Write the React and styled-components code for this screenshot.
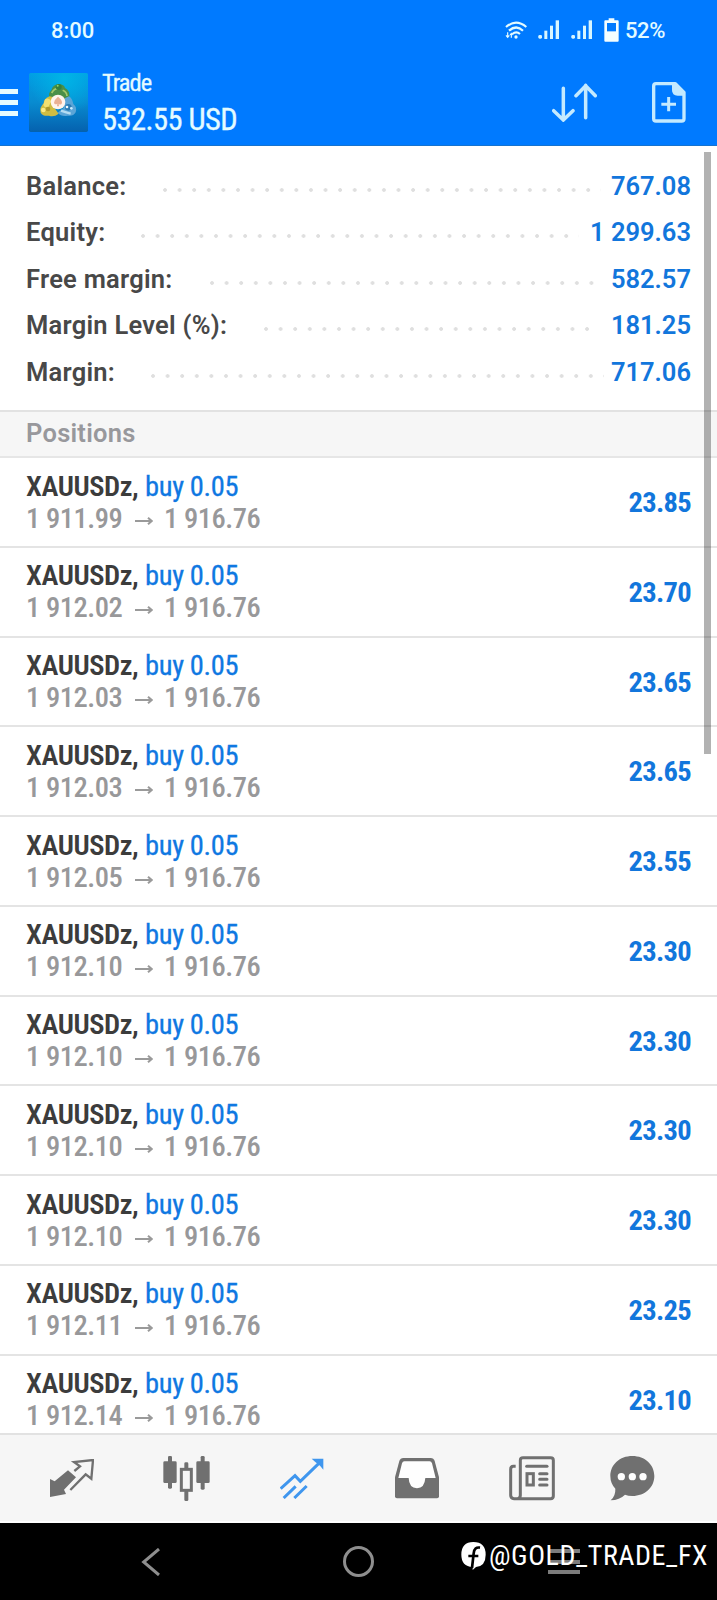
import React from "react";
import styled, { createGlobalStyle } from "styled-components";

const summary = [
  { label: "Balance:", value: "767.08", start: 162.5, dots: 30 },
  { label: "Equity:", value: "1 299.63", start: 140.5, dots: 30 },
  { label: "Free margin:", value: "582.57", start: 209.5, dots: 27 },
  { label: "Margin Level (%):", value: "181.25", start: 263.5, dots: 23 },
  { label: "Margin:", value: "717.06", start: 151, dots: 31 },
];

const positions = [
  { open: "1 911.99", profit: "23.85" },
  { open: "1 912.02", profit: "23.70" },
  { open: "1 912.03", profit: "23.65" },
  { open: "1 912.03", profit: "23.65" },
  { open: "1 912.05", profit: "23.55" },
  { open: "1 912.10", profit: "23.30" },
  { open: "1 912.10", profit: "23.30" },
  { open: "1 912.10", profit: "23.30" },
  { open: "1 912.10", profit: "23.30" },
  { open: "1 912.11", profit: "23.25" },
  { open: "1 912.14", profit: "23.10" },
];

const WifiIcon = () => (
  <svg width="22" height="19" viewBox="0 0 66 57" fill="none" stroke="#e4fbff">
    <path d="M3 18Q33-8 64 18M12 29Q34 10 54 29M22 39Q34 29 45 39" strokeWidth="6.5" />
    <circle cx="33" cy="48" r="5" fill="#e4fbff" stroke="none" />
    <path d="M8 34v14M3 43l5 6 5-6M19 50V38M15 42l4-5 4 5" strokeWidth="3.5" />
  </svg>
);

const SignalIcon = () => (
  <svg width="22" height="20" viewBox="0 0 66 60" fill="#d8f6ff">
    <rect x="1" y="45" width="11" height="11" rx="4" />
    <rect x="19" y="32" width="9" height="25" />
    <rect x="36" y="17" width="9" height="40" />
    <rect x="53" y="1" width="10" height="56" />
  </svg>
);

const BatteryIcon = () => (
  <svg width="15" height="24" viewBox="0 0 45 72">
    <path d="M14 1h17v6h10q3 0 3 3v58q0 3-3 3H4q-3 0-3-3V10q0-3 3-3h10z" fill="#f4feff" />
    <rect x="9" y="15" width="27" height="25" fill="#007aff" />
  </svg>
);

const AppLogo = () => (
  <svg width="59" height="59" viewBox="0 0 177 177">
    <defs>
      <linearGradient id="sky" x1="0" y1="0" x2="0" y2="1">
        <stop offset="0" stopColor="#009fe4" />
        <stop offset="0.5" stopColor="#088bd0" />
        <stop offset="1" stopColor="#0561ae" />
      </linearGradient>
      <radialGradient id="glow" cx="0.6" cy="0.1" r="0.6">
        <stop offset="0" stopColor="#00b4e6" />
        <stop offset="1" stopColor="#00b4e6" stopOpacity="0" />
      </radialGradient>
    </defs>
    <rect width="177" height="177" rx="5" fill="url(#sky)" />
    <rect width="177" height="177" rx="5" fill="url(#glow)" />
    <path d="M62 74q-6-12 5-22 4-17 21-18 17-1 20 11 15 8 13 27l-14 18-16-19-18 6z" fill="#4a8f48" />
    <path d="M68 60q7-13 17-13M101 52q12 5 13 17" stroke="#a5c96b" strokeWidth="5" fill="none" />
    <circle cx="89" cy="42" r="9" fill="#357f3d" />
    <circle cx="86" cy="38" r="3" fill="#91d467" />
    <path d="M62 70q-18 7-18 21-13 12-9 28 8 12 25 9 15 5 29-6l-14-19 5-29z" fill="#cfbd42" />
    <path d="M48 79q11-7 19 5l-9 19q-11 3-15-7z" fill="#f1df70" />
    <circle cx="43" cy="111" r="7" fill="#fae984" />
    <circle cx="57" cy="108" r="7" fill="#af982b" />
    <path d="M107 76l13-6q10 6 13 23 12 9 7 25-7 13-25 10-17 4-29-9l18-14z" fill="#5ba5d7" />
    <path d="M96 113q12 5 29 9" stroke="#b4dcf2" strokeWidth="7" />
    <circle cx="118" cy="103" r="10" fill="#2c7cb4" />
    <circle cx="114" cy="102" r="4" fill="#eefaff" />
    <circle cx="127" cy="106" r="4" fill="#c9ecff" />
    <circle cx="87" cy="87" r="22" fill="#fff4ec" />
    <path d="M87 71q13 10 12 19-3 8-10 2l1 8h-6l1-8q-8 5-10-3 1-9 12-18z" fill="#eab093" />
  </svg>
);

const SortIcon = () => (
  <svg width="45" height="39" viewBox="0 0 135 117" fill="none" stroke="#c4eaff" strokeWidth="10.5" strokeLinecap="round">
    <path d="M34 16v92M5 83l29 28 29-28M101 104V7M72 38L101 8l29 30" />
  </svg>
);

const NewOrderIcon = () => (
  <svg width="34" height="41" viewBox="0 0 102 123" fill="none" stroke="#c4eaff" strokeWidth="10">
    <path d="M12 5h58l26 26v79q0 7-7 7H12q-7 0-7-7V12q0-7 7-7z" strokeLinejoin="round" />
    <path d="M60 5h12l26 26v10H77q-17 0-17-17z" fill="#c4eaff" stroke="none" />
    <path d="M50 45v43M28 67h44" strokeWidth="9" />
  </svg>
);

const QuotesIcon = () => (
  <svg width="44" height="38" viewBox="0 0 132 114" fill="none" stroke="#707070" strokeWidth="7">
    <path d="M0 60l14 7 40-33 24 21-36 37 6 13-48 9z" fill="#707070" stroke="none" />
    <path d="M73 36l17-14-18-13 57-6-5 56-17-13-46 47" />
  </svg>
);

const ChartIcon = () => (
  <svg width="47" height="45" viewBox="0 0 141 135" fill="#707070">
    <rect x="1" y="16" width="40" height="65" rx="4" />
    <rect x="15" y="0" width="12" height="98" rx="4" />
    <rect x="100" y="16" width="40" height="65" rx="4" />
    <rect x="113" y="0" width="12" height="101" rx="4" />
    <rect x="64" y="19" width="12" height="20" rx="4" />
    <rect x="64" y="104" width="12" height="31" rx="4" />
    <rect x="55" y="40" width="30" height="63" fill="none" stroke="#707070" strokeWidth="9" />
  </svg>
);

const TradeIcon = () => (
  <svg width="44" height="41" viewBox="0 0 132 123" fill="none" stroke="#3f96ee" strokeWidth="9">
    <path d="M2 92l43-39 16 17 61-59M11 120l36-35M43 120l37-36" />
    <path d="M95 2h35v33l-10-12-15-12z" fill="#3f96ee" stroke="none" />
  </svg>
);

const HistoryIcon = () => (
  <svg width="44" height="41" viewBox="0 0 132 123">
    <path
      d="M25 0h82q9 0 12 9l13 49v57q0 6-6 6H6q-6 0-6-6V58L13 9q3-9 12-9z"
      fill="#707070"
    />
    <path d="M28 10h76q5 0 7 6l11 44H91q-2 30-25 31-24-1-25-31H10l11-44q2-6 7-6z" fill="#fefefe" />
  </svg>
);

const NewsIcon = () => (
  <svg width="46" height="45" viewBox="0 0 138 135" fill="none" stroke="#707070" strokeWidth="9">
    <path d="M20 31h-7q-8 0-8 9v78q0 10 10 10h110q8 0 8-8V13q0-8-8-8H42q-8 0-8 8v105q0 10-9 10" />
    <path d="M53 31h61" strokeLinecap="round" />
    <rect x="54" y="53" width="19" height="34" />
    <path d="M92 53h22M92 70h22M92 87h22" strokeLinecap="round" />
  </svg>
);

const MessagesIcon = () => (
  <svg width="45" height="45" viewBox="0 0 135 135">
    <path d="M67 0c38 0 66 26 66 60s-28 60-66 60q-13 0-22-4-16 16-43 17 15-13 14-35Q1 82 1 60C1 26 29 0 67 0z" fill="#707070" />
    <g fill="#fefefe">
      <circle cx="34" cy="62" r="11" />
      <circle cx="67" cy="62" r="11" />
      <circle cx="99" cy="62" r="11" />
    </g>
  </svg>
);

const FacebookIcon = () => (
  <svg width="25" height="29" viewBox="0 0 75 87">
    <path d="M37 0q37 0 37 38 0 34-29 37L35 84v-9Q1 73 1 38 1 0 37 0z" fill="#fff" />
    <path d="M57 17q-17-3-19 17l-5 44M22 42h30" stroke="#000" strokeWidth="8" fill="none" />
  </svg>
);

const App = () => {
  return (
    <Screen>
      <GlobalStyle />
      <Header>
        <StatusBar>
          <Clock>8:00</Clock>
          <StatusIcons>
            <WifiIcon />
            <SignalIcon />
            <SignalIcon />
            <BatteryIcon />
            <span>52%</span>
          </StatusIcons>
        </StatusBar>
        <Toolbar>
          <MenuButton>
            <i />
            <i />
            <i />
          </MenuButton>
          <AppLogo />
          <Heading>
            <Title>Trade</Title>
            <Amount>532.55 USD</Amount>
          </Heading>
          <Actions>
            <SortIcon />
            <NewOrderIcon />
          </Actions>
        </Toolbar>
      </Header>

      <Content>
        <Summary>
          {summary.map((item) => (
            <SummaryRow key={item.label}>
              <Label $width={item.start - 26}>{item.label}</Label>
              <Dots $count={item.dots} />
              <Value>{item.value}</Value>
            </SummaryRow>
          ))}
        </Summary>
        <SectionTitle>Positions</SectionTitle>
        <PositionList>
          {positions.map((item, i) => (
            <Position key={i}>
              <div>
                <Line>
                  <Symbol>XAUUSDz,</Symbol>
                  <Side>buy 0.05</Side>
                </Line>
                <Line>
                  <Price $width={97}>{item.open}</Price>
                  <Arrow>
                    <svg width="18" height="10" viewBox="0 0 54 30" fill="none" stroke="#9a9a9a" strokeWidth="6">
                      <path d="M0 15h48M39 5l11 10-11 10" />
                    </svg>
                  </Arrow>
                  <Price>1 916.76</Price>
                </Line>
              </div>
              <Profit>{item.profit}</Profit>
            </Position>
          ))}
        </PositionList>
        <Scrollbar />
      </Content>

      <TabBar>
        <Tab><QuotesIcon /></Tab>
        <Tab><ChartIcon /></Tab>
        <Tab><TradeIcon /></Tab>
        <Tab><HistoryIcon /></Tab>
        <Tab><NewsIcon /></Tab>
        <Tab $width={87}><MessagesIcon /></Tab>
      </TabBar>

      <SystemNav>
        <svg width="19" height="28" viewBox="0 0 57 84" fill="none" stroke="#8e8e8e" strokeWidth="9">
          <path d="M54 3L8 42l46 39" />
        </svg>
        <HomeButton />
        <RecentButton>
          <i />
          <i />
          <i />
        </RecentButton>
        <Handle>
          <FacebookIcon />
          <HandleText>@GOLD_TRADE_FX</HandleText>
        </Handle>
      </SystemNav>
    </Screen>
  );
};

export default App;

const GlobalStyle = createGlobalStyle`
  * {
    box-sizing: border-box;
  }

  body {
    margin: 0;
    background: #000;
    font-family: Roboto, "Liberation Sans", sans-serif;
  }

  svg {
    display: block;
    flex-shrink: 0;
  }
`;

const Screen = styled.div`
  width: 717px;
  height: 1600px;
  display: flex;
  flex-direction: column;
  background: #fff;
  overflow: hidden;
`;

const Header = styled.header`
  height: 146px;
  background: #007aff;
  border-bottom: 1px solid #1673cf;
  color: #e4fbff;
`;

const StatusBar = styled.div`
  height: 60px;
  padding: 0 51px;
  display: flex;
  align-items: center;
  justify-content: space-between;
  font-size: 22px;
  font-weight: 500;
`;

const Clock = styled.span`
  letter-spacing: 0;
`;

const StatusIcons = styled.div`
  display: flex;
  align-items: center;
  gap: 11px;

  span {
    width: 41px;
    margin-left: -5px;
    letter-spacing: -0.4px;
  }
`;

const Toolbar = styled.div`
  height: 85px;
  display: flex;
  align-items: center;
`;

const MenuButton = styled.div`
  width: 29px;
  display: flex;
  flex-direction: column;
  gap: 6px;

  i {
    width: 18px;
    height: 5px;
    background: #e4fbff;
  }
`;

const Heading = styled.div`
  margin-left: 14px;
  padding-bottom: 2px;
  flex: 1;
  font-stretch: 75%;
`;

const Title = styled.div`
  font-size: 24.5px;
  line-height: 36px;
  letter-spacing: -1px;
  -webkit-text-stroke: 0.3px;
`;

const Amount = styled.div`
  font-size: 30.5px;
  line-height: 37px;
  letter-spacing: -0.55px;
  -webkit-text-stroke: 0.3px;
`;

const Actions = styled.div`
  display: flex;
  align-items: center;
  gap: 55px;
  padding-right: 31px;
`;

const Content = styled.main`
  position: relative;
  height: 1287px;
  overflow: hidden;
`;

const Summary = styled.section`
  height: 264px;
  padding: 16.5px 26px 0;
`;

const SummaryRow = styled.div`
  height: 46.5px;
  display: flex;
  align-items: center;
  font-size: 25.5px;
  font-weight: 600;
  line-height: 46px;
`;

const Label = styled.span`
  width: ${(props) => props.$width}px;
  color: #484848;
  white-space: nowrap;
  letter-spacing: 0.25px;
`;

const Dots = styled.span`
  width: ${(props) => props.$count * 14.6}px;
  height: 4px;
  margin-top: 8px;
  background: radial-gradient(circle at 2px 2px, #dfdfdf 1.5px, transparent 2.2px);
  background-size: 14.6px 4px;
`;

const Value = styled.span`
  margin-left: auto;
  color: #1276dc;
`;

const SectionTitle = styled.h2`
  height: 48px;
  margin: 0;
  padding: 0 26px;
  border-top: 2px solid #e2e2e2;
  border-bottom: 2px solid #e6e6e6;
  background: #f6f6f6;
  color: #98989c;
  font-size: 25.5px;
  font-weight: 600;
  line-height: 42px;
  letter-spacing: 0.25px;
`;

const PositionList = styled.div`
  font-size: 28.5px;
  font-stretch: 75%;
`;

const Position = styled.div`
  height: 89.75px;
  padding: 1.5px 26px 0;
  border-bottom: 2px solid #e4e4e4;
  display: flex;
  align-items: center;
  justify-content: space-between;
`;

const Line = styled.div`
  height: 32px;
  line-height: 32px;
  display: flex;
  white-space: nowrap;
`;

const Symbol = styled.span`
  width: 119px;
  color: #3c3c3c;
  font-weight: 600;
  letter-spacing: -0.45px;
`;

const Side = styled.span`
  color: #0f78e2;
  letter-spacing: -0.35px;
  -webkit-text-stroke: 0.3px;
`;

const Price = styled.span`
  width: ${(props) => (props.$width ? `${props.$width}px` : "auto")};
  color: #98989a;
  font-weight: 500;
  letter-spacing: -0.45px;
`;

const Arrow = styled.span`
  width: 18px;
  margin: 13px 11px 0 12px;
`;

const Profit = styled.span`
  color: #1276dc;
  font-weight: 700;
  letter-spacing: -0.7px;
`;

const Scrollbar = styled.div`
  position: absolute;
  top: 6px;
  right: 6px;
  width: 7px;
  height: 602px;
  background: rgba(0, 0, 0, 0.3);
`;

const TabBar = styled.nav`
  height: 90px;
  padding-left: 14px;
  display: flex;
  align-items: center;
  background: #f6f6f6;
  border-top: 2px solid #e2e2e2;
  border-bottom: 2px solid #fff;
`;

const Tab = styled.div`
  width: ${(props) => props.$width || 115}px;
  display: flex;
  justify-content: center;
`;

const SystemNav = styled.div`
  position: relative;
  height: 77px;
  padding: 0 137px 0 141px;
  display: flex;
  align-items: center;
  background: #000;
`;

const HomeButton = styled.div`
  width: 31px;
  height: 31px;
  margin: 0 auto 0 183px;
  border: 3px solid #8e8e8e;
  border-radius: 50%;
`;

const RecentButton = styled.div`
  display: flex;
  flex-direction: column;
  gap: 6.5px;

  i {
    width: 32px;
    height: 4px;
    background: #7c7c7c;
  }
`;

/* account handle printed over the navigation keys */
const Handle = styled.div`
  position: absolute;
  top: 16px;
  left: 461px;
  display: flex;
  align-items: center;
  color: #fff;
`;

const HandleText = styled.span`
  margin-left: 3px;
  font-size: 28px;
  font-stretch: 87%;
  font-weight: 400;
  line-height: 34px;
  letter-spacing: 0.55px;
`;
